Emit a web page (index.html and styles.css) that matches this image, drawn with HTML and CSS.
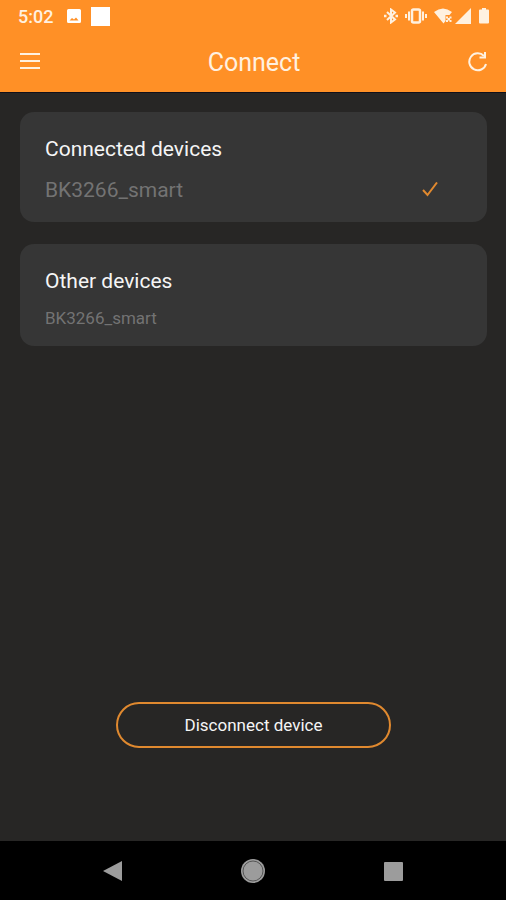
FILE: index.html
```html
<!DOCTYPE html>
<html lang="en">
<head>
  <meta charset="UTF-8" />
  <meta name="viewport" content="width=device-width, initial-scale=1.0" />
  <title>Connect</title>
  <link rel="stylesheet" href="styles.css">
</head>
<body>
  <!-- Header -->
  <header class="header">
    <div class="status-bar">
      <span class="time">5:02</span>
      <svg class="photo-icon" width="14" height="14" viewBox="0 0 28 28">
        <path fill="currentColor" fill-rule="evenodd" d="M3 0h22a3 3 0 0 1 3 3v22a3 3 0 0 1-3 3H3a3 3 0 0 1-3-3V3a3 3 0 0 1 3-3zM5 23h18l-5-6-4 4-4-3z" />
      </svg>
      <span class="app-square"></span>
      <div class="status-icons">
        <svg width="14" height="16" viewBox="0 0 28 32" fill="none" stroke="currentColor" stroke-width="4">
          <path d="M6 8l16 15-8 6V3l8 6L6 24" />
          <path d="M0 16h5M23 16h5" stroke-width="5" />
        </svg>
        <svg width="22" height="16" viewBox="0 0 44 32" fill="none" stroke="currentColor" stroke-width="5">
          <rect x="14" y="3" width="16" height="26" rx="3" />
          <path d="M8 7v18M36 7v18M2 12v8M42 12v8" stroke-width="4" />
        </svg>
        <div class="signal-icons">
          <svg width="18" height="16" viewBox="0 0 36 32" fill="currentColor">
            <path d="M0 8Q18-6 36 8l-5 6h-8v12l-4 5z" />
            <path d="M25 17h3v3h3v-3h4v4h-3v3h3v4h-4v-3h-3v3h-4v-4h3v-3h-3v-4z" />
          </svg>
          <svg width="16" height="16" viewBox="0 0 16 16" fill="currentColor">
            <path d="M16 0v16H0z" />
          </svg>
        </div>
        <svg width="12" height="16" viewBox="0 0 24 32" fill="currentColor">
          <path d="M8 0h8v3h4a2 2 0 0 1 2 2v24a2 2 0 0 1-2 2H4a2 2 0 0 1-2-2V5a2 2 0 0 1 2-2h4z" />
        </svg>
      </div>
    </div>
    <div class="app-bar">
      <button class="icon-btn" type="button" aria-label="Menu">
        <svg width="20" height="20" viewBox="0 0 20 20" fill="none" stroke="currentColor" stroke-width="2">
          <path d="M0 2h20M0 9h20M0 16h20" />
        </svg>
      </button>
      <h1>Connect</h1>
      <button class="icon-btn" type="button" aria-label="Refresh">
        <svg width="20" height="20" viewBox="0 0 40 40" fill="none" stroke="currentColor" stroke-width="4">
          <path d="M36 24A17 17 0 1 1 32 8" />
          <path d="M34 0v11H23" />
        </svg>
      </button>
    </div>
  </header>

  <!-- Device List -->
  <main class="main">
    <section class="card">
      <h2>Connected devices</h2>
      <div class="device connected">
        <span>BK3266_smart</span>
        <svg width="16" height="16" viewBox="0 0 32 32" fill="none" stroke="currentColor" stroke-width="4">
          <path d="M2 16l9 10L30 1" />
        </svg>
      </div>
    </section>
    <section class="card">
      <h2>Other devices</h2>
      <div class="device">
        <span>BK3266_smart</span>
      </div>
    </section>
    <button class="disconnect-btn" type="button">Disconnect device</button>
  </main>

  <!-- System Navigation -->
  <nav class="nav">
    <button class="nav-btn" type="button" aria-label="Back">
      <svg width="24" height="24" viewBox="0 0 24 24" fill="currentColor">
        <path d="M21 2v20L2 12z" />
      </svg>
    </button>
    <button class="nav-btn" type="button" aria-label="Home">
      <svg width="24" height="24" viewBox="0 0 24 24">
        <circle cx="12" cy="12" r="12" fill="currentColor" />
        <circle cx="12" cy="12" r="10" fill="none" stroke="#555" stroke-width="1" />
      </svg>
    </button>
    <button class="nav-btn" type="button" aria-label="Recent apps">
      <svg width="24" height="24" viewBox="0 0 24 24" fill="currentColor">
        <rect x="3" y="3" width="19" height="19" rx="1" />
      </svg>
    </button>
  </nav>
</body>
</html>
```

FILE: styles.css
```css
:root {
  --bg-color: #272625;
  --card-bg: #363636;
  --accent: #ff9026;
  --accent-line: #e0892f;
  --header-text: #fff1e0;
  --text-color: #f5f5f5;
  --muted-text: #737373;
  --nav-icon: #9c9c9c;
}

* {
  box-sizing: border-box;
}

body {
  font-family: Roboto, sans-serif;
  margin: 0;
  min-height: 100vh;
  display: flex;
  flex-direction: column;
  background-color: var(--bg-color);
  color: var(--text-color);
}

svg {
  display: block;
}

button {
  font-family: inherit;
  cursor: pointer;
}

.header {
  background-color: var(--accent);
  color: var(--header-text);
  border-bottom: 1px solid #11101a;
}

.status-bar {
  display: flex;
  align-items: center;
  height: 32px;
  padding: 0 16px 0 18px;
}

.time {
  font-size: 18px;
  font-weight: 500;
}

.photo-icon {
  margin-left: 14px;
  color: #fff;
}

.app-square {
  width: 19px;
  height: 19px;
  margin-left: 10px;
  background-color: #fff;
}

.status-icons {
  display: flex;
  gap: 7px;
  margin-left: auto;
}

.signal-icons {
  display: flex;
  gap: 3px;
}

.app-bar {
  display: flex;
  align-items: center;
  justify-content: space-between;
  height: 60px;
  padding: 0 18px 0 20px;
}

.app-bar h1 {
  margin: 0;
  font-size: 25px;
  font-weight: 400;
}

.icon-btn,
.nav-btn {
  padding: 0;
  border: none;
  background: none;
  color: inherit;
}

.main {
  flex: 1;
  display: flex;
  flex-direction: column;
  gap: 22px;
  padding: 19px 19px 93px 20px;
}

.card {
  padding: 24px 49px 16px 25px;
  border-radius: 14px;
  background-color: var(--card-bg);
}

.card h2 {
  margin: 0 0 12px;
  font-size: 21px;
  line-height: 26px;
  font-weight: 400;
}

.device {
  display: flex;
  align-items: center;
  justify-content: space-between;
  font-size: 17px;
  line-height: 24px;
  color: var(--muted-text);
}

.device.connected {
  font-size: 21px;
  line-height: 32px;
}

.device svg {
  color: var(--accent-line);
}

.disconnect-btn {
  align-self: center;
  width: 60%;
  max-width: 275px;
  height: 46px;
  margin-top: auto;
  border: 2px solid var(--accent-line);
  border-radius: 23px;
  background: none;
  color: var(--text-color);
  font-size: 17px;
}

.nav {
  display: flex;
  align-items: center;
  justify-content: space-between;
  height: 59px;
  padding: 0 20%;
  background-color: #000;
  color: var(--nav-icon);
}
```
